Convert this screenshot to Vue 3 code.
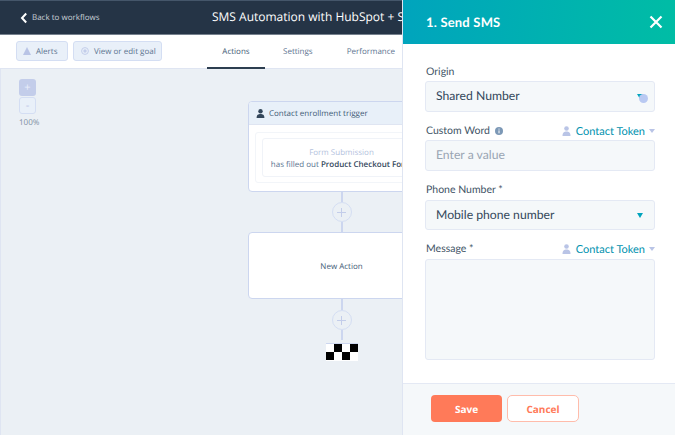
<script setup>
const tabs = [
  { label: 'Actions', active: true },
  { label: 'Settings', active: false },
  { label: 'Performance', active: false }
]
</script>

<template>
  <div class="page">
    <header class="topbar">
      <div class="back">
        <svg class="back-icon" width="8" height="12" viewBox="0 0 8 12">
          <path d="M6.2 1.5 L2 6 L6.2 10.5" fill="none" stroke="#fff" stroke-width="2" />
        </svg>
        <span>Back to workflows</span>
      </div>
      <div class="title">SMS Automation with HubSpot + SMS</div>
    </header>

    <div class="toolbar">
      <div class="tool-buttons">
        <div class="tool-btn alerts">
          <svg width="8" height="8" viewBox="0 0 8 8"><path d="M4 0 L8 8 L0 8 Z" fill="#b9c4e6" /></svg>
          <span>Alerts</span>
        </div>
        <div class="tool-btn goal">
          <svg width="8" height="8" viewBox="0 0 8 8">
            <circle cx="4" cy="4" r="3.4" fill="none" stroke="#c3cdea" />
            <circle cx="4" cy="4" r="1.7" fill="#c3cdea" />
          </svg>
          <span>View or edit goal</span>
        </div>
      </div>
      <nav class="tabs">
        <div v-for="tab in tabs" :key="tab.label" class="tab" :class="{ active: tab.active }">{{ tab.label }}</div>
      </nav>
    </div>

    <main class="canvas">
      <div class="zoom">
        <div class="zoom-btn plus">+</div>
        <div class="zoom-btn minus">-</div>
        <div class="zoom-label">100%</div>
      </div>

      <div class="flow">
        <div class="card trigger">
          <div class="card-head">
            <svg width="9" height="9" viewBox="0 0 9 9">
              <circle cx="4.5" cy="2.3" r="2.2" fill="#33475b" />
              <path d="M0.6 9 C0.6 5.8 2.2 5 4.5 5 C6.8 5 8.4 5.8 8.4 9 Z" fill="#33475b" />
            </svg>
            <span>Contact enrollment trigger</span>
          </div>
          <div class="card-body">
            <div class="inner">
              <div class="inner-box">
                <div class="inner-title">Form Submission</div>
                <div class="inner-text">has filled out <b>Product Checkout Form</b></div>
              </div>
            </div>
          </div>
        </div>

        <div class="line"></div>
        <div class="add">
          <svg width="11" height="11" viewBox="0 0 11 11"><path d="M5.5 1 V10 M1 5.5 H10" stroke="#c3cdea" stroke-width="1" /></svg>
        </div>
        <div class="line"></div>

        <div class="card action">New Action</div>

        <div class="line long"></div>
        <div class="add">
          <svg width="11" height="11" viewBox="0 0 11 11"><path d="M5.5 1 V10 M1 5.5 H10" stroke="#c3cdea" stroke-width="1" /></svg>
        </div>
        <div class="line"></div>

        <div class="finish">
          <i v-for="n in 8" :key="n" :class="(n + (n > 4 ? 1 : 0)) % 2 === 0 ? 'dark' : ''"></i>
        </div>
      </div>
    </main>

    <aside class="panel">
      <div class="panel-head">
        <span>1. Send SMS</span>
        <svg width="14" height="14" viewBox="0 0 14 14">
          <path d="M1.5 1.5 L12.5 12.5 M12.5 1.5 L1.5 12.5" stroke="#fff" stroke-width="2.2" />
        </svg>
      </div>

      <div class="panel-body">
        <div class="field">
          <div class="label-row"><span>Origin</span></div>
          <div class="input origin">
            <span>Shared Number</span>
            <i class="caret"></i>
            <i class="dot"></i>
          </div>
        </div>

        <div class="field">
          <div class="label-row">
            <span class="with-info">Custom Word
              <svg width="8" height="8" viewBox="0 0 8 8">
                <circle cx="4" cy="4" r="4" fill="#7c98b6" />
                <path d="M4 3.4 V6.3 M4 1.6 V2.6" stroke="#fff" stroke-width="1" />
              </svg>
            </span>
            <span class="token">
              <svg width="9" height="10" viewBox="0 0 9 10">
                <circle cx="4.5" cy="2.5" r="2.3" fill="#b9c4e6" />
                <path d="M0.5 10 C0.5 6.4 2.2 5.5 4.5 5.5 C6.8 5.5 8.5 6.4 8.5 10 Z" fill="#b9c4e6" />
              </svg>
              Contact Token
              <i class="token-caret"></i>
            </span>
          </div>
          <div class="input placeholder">Enter a value</div>
        </div>

        <div class="field">
          <div class="label-row"><span>Phone Number *</span></div>
          <div class="input short">
            <span>Mobile phone number</span>
            <i class="caret"></i>
          </div>
        </div>

        <div class="field">
          <div class="label-row">
            <span>Message *</span>
            <span class="token">
              <svg width="9" height="10" viewBox="0 0 9 10">
                <circle cx="4.5" cy="2.5" r="2.3" fill="#b9c4e6" />
                <path d="M0.5 10 C0.5 6.4 2.2 5.5 4.5 5.5 C6.8 5.5 8.5 6.4 8.5 10 Z" fill="#b9c4e6" />
              </svg>
              Contact Token
              <i class="token-caret"></i>
            </span>
          </div>
          <div class="textarea"></div>
        </div>
      </div>

      <div class="panel-foot">
        <div class="btn save">Save</div>
        <div class="btn cancel">Cancel</div>
      </div>
    </aside>
  </div>
</template>

<style scoped>
.page {
  position: relative;
  width: 675px;
  height: 435px;
  overflow: hidden;
  display: flex;
  flex-direction: column;
  background: #ebf0f5;
  font-family: "Open Sans", sans-serif;
  color: #33475b;
  text-rendering: geometricPrecision;
}

.topbar {
  height: 35px;
  flex: none;
  box-sizing: border-box;
  display: flex;
  align-items: center;
  background: #253446;
  border-top: 1px solid #45566a;
  border-bottom: 1px solid #76818e;
  position: relative;
}
.back {
  display: flex;
  align-items: center;
  gap: 4px;
  margin-left: 20px;
  font-size: 8px;
  color: #c9cfd6;
}
.title {
  position: absolute;
  left: 212px;
  top: 7px;
  font-size: 12px;
  line-height: 18px;
  color: #fff;
  white-space: nowrap;
}

.toolbar {
  height: 34px;
  flex: none;
  box-sizing: border-box;
  display: flex;
  background: #fff;
  border-bottom: 1px solid #dfe5f2;
}
.tool-buttons {
  display: flex;
  align-items: center;
  gap: 5px;
  margin-left: 16px;
  padding-bottom: 1px;
}
.tool-btn {
  height: 20px;
  box-sizing: border-box;
  display: flex;
  align-items: center;
  gap: 5px;
  background: #e9f0f9;
  border: 1px solid #d4def3;
  border-radius: 3px;
  font-size: 8px;
  color: #5c7490;
}
.alerts {
  width: 52px;
  padding-left: 6px;
}
.goal {
  width: 89px;
  padding-left: 7px;
}
.tabs {
  display: flex;
  margin-left: 45px;
}
.tab {
  font-size: 8px;
  line-height: 34px;
  color: #5c7490;
  margin-right: 34px;
  white-space: nowrap;
}
.tab.active {
  width: 58px;
  margin-right: 18px;
  text-align: center;
  color: #425b76;
  border-bottom: 2px solid #2d3e50;
  height: 34px;
  box-sizing: border-box;
}

.canvas {
  flex: 1;
  display: flex;
  border-left: 1px solid #dfe5f2;
}
.zoom {
  width: 38px;
  margin-left: 18px;
  margin-top: 10px;
  display: flex;
  flex-direction: column;
  align-items: flex-start;
}
.zoom-btn {
  width: 17px;
  height: 17px;
  box-sizing: border-box;
  border-radius: 3px;
  display: flex;
  align-items: center;
  justify-content: center;
  font-size: 11px;
  margin-bottom: 1px;
}
.plus {
  background: #c3cdea;
  color: #e9eefa;
}
.minus {
  background: #e9f0f9;
  border: 1px solid #d4def3;
  color: #b9c4e6;
}
.zoom-label {
  font-size: 8px;
  line-height: 12px;
  margin-top: 2px;
  color: #7c8c9f;
}

.flow {
  margin-left: 191px;
  margin-top: 32px;
  width: 187px;
  flex: none;
  display: flex;
  flex-direction: column;
  align-items: center;
}
.card {
  width: 187px;
  box-sizing: border-box;
  background: #fff;
  border: 1px solid #ccd6ef;
  border-radius: 4px;
}
.trigger {
  height: 91px;
  overflow: hidden;
}
.card-head {
  height: 23px;
  box-sizing: border-box;
  display: flex;
  align-items: center;
  gap: 4px;
  padding-left: 7px;
  background: #e8f0f9;
  border-bottom: 1px solid #dfe5f2;
  font-size: 8px;
  color: #425b76;
}
.card-body {
  padding: 7px 6px;
}
.inner {
  height: 51px;
  box-sizing: border-box;
  border: 1px solid #f2f5f9;
  border-radius: 3px;
  padding: 5px 6px;
}
.inner-box {
  height: 39px;
  box-sizing: border-box;
  border: 1px solid #f0f3f8;
  border-radius: 3px;
  padding-top: 8px;
  font-size: 8px;
  line-height: 11px;
  text-align: center;
  color: #5c7490;
  white-space: nowrap;
  display: flex;
  flex-direction: column;
  align-items: center;
}
.inner-title {
  color: #b4c2dd;
  margin-bottom: 1px;
}
.inner-text b {
  font-weight: 600;
  color: #33475b;
}
.action {
  height: 67px;
  display: flex;
  align-items: center;
  justify-content: center;
  padding-top: 2px;
  font-size: 8px;
  color: #425b76;
}
.line {
  width: 2px;
  height: 10px;
  background: #ccd6ef;
}
.line.long {
  height: 11px;
}
.add {
  width: 20px;
  height: 20px;
  box-sizing: border-box;
  border: 1px solid #d4def3;
  border-radius: 50%;
  display: flex;
  align-items: center;
  justify-content: center;
}
.finish {
  width: 32px;
  height: 17px;
  display: grid;
  grid-template-columns: repeat(4, 8px);
  grid-template-rows: repeat(2, 8px);
  background: #fff;
  border-top: 1px solid #ccd6ef;
  margin-top: 3px;
}
.finish i.dark {
  background: #000;
}

.panel {
  position: absolute;
  top: 0;
  right: 0;
  width: 273px;
  height: 435px;
  display: flex;
  flex-direction: column;
  background: #fff;
  border-left: 1px solid #dfe5f2;
  box-sizing: border-box;
  font-family: Lato, sans-serif;
}
.panel-head {
  height: 44px;
  flex: none;
  display: flex;
  align-items: center;
  justify-content: space-between;
  padding: 0 12px 0 23px;
  background: linear-gradient(95deg, #00a4bd, #00bda5);
  color: #fff;
  font-size: 13px;
  font-weight: 700;
  letter-spacing: 0.2px;
}
.panel-body {
  flex: 1;
  padding: 19px 20px 0 22px;
  display: flex;
  flex-direction: column;
  gap: 10px;
}
.label-row {
  display: flex;
  justify-content: space-between;
  align-items: center;
  height: 16px;
  box-sizing: border-box;
  margin-bottom: 2px;
  padding: 2px 0 0 1px;
  font-size: 10.5px;
  color: #425466;
}
.field:nth-child(n + 3) .label-row {
  margin-bottom: 3px;
}
.with-info {
  display: flex;
  align-items: center;
  gap: 5px;
}
.token {
  display: flex;
  align-items: center;
  gap: 4px;
  font-size: 11px;
  color: #0091ae;
}
.token svg {
  margin-right: 1px;
}
.token-caret {
  width: 0;
  height: 0;
  border-left: 3px solid transparent;
  border-right: 3px solid transparent;
  border-top: 4px solid #b9c4e6;
}
.input {
  position: relative;
  height: 31px;
  box-sizing: border-box;
  display: flex;
  align-items: center;
  justify-content: space-between;
  padding: 0 11px 2px 10px;
  background: #f5f8fa;
  border: 1px solid #e4e9f4;
  border-radius: 3px;
  font-size: 12.2px;
  color: #33475b;
}
.input.short {
  height: 30px;
}
.placeholder {
  color: #99a5b3;
}
.caret {
  width: 0;
  height: 0;
  border-left: 3.5px solid transparent;
  border-right: 3.5px solid transparent;
  border-top: 5px solid #00a4bd;
  margin-top: 2px;
}
.dot {
  position: absolute;
  right: 6px;
  top: 12px;
  width: 9px;
  height: 9px;
  border-radius: 50%;
  background: #b9c9f2;
}
.textarea {
  height: 101px;
  box-sizing: border-box;
  background: #f5f8fa;
  border: 1px solid #e4e9f4;
  border-radius: 3px;
}
.panel-foot {
  height: 52px;
  flex: none;
  box-sizing: border-box;
  display: flex;
  gap: 5px;
  padding: 11px 0 0 28px;
  background: #f5f8fa;
  border-top: 1px solid #e4e9f4;
  font-family: "Open Sans", sans-serif;
}
.btn {
  height: 27px;
  box-sizing: border-box;
  display: flex;
  align-items: center;
  justify-content: center;
  border-radius: 4px;
  font-size: 10px;
  font-weight: 700;
}
.save {
  width: 71px;
  background: #ff7a59;
  color: #fff;
}
.cancel {
  width: 72px;
  background: #fff;
  border: 1px solid #ffbcab;
  border-radius: 5px;
  color: #ff7a59;
}
</style>
